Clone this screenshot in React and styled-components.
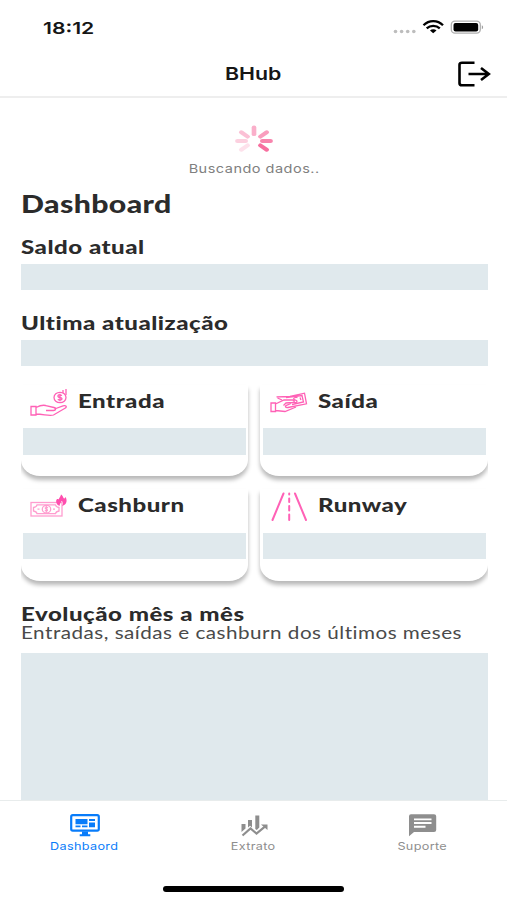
import styled, { createGlobalStyle } from "styled-components"

const cards = [
    { title: "Entrada", Icon: EntradaIcon },
    { title: "Saída", Icon: SaidaIcon },
    { title: "Cashburn", Icon: CashburnIcon },
    { title: "Runway", Icon: RunwayIcon },
]

const spokes = [
    { angle: 0, opacity: 0.55 },
    { angle: 50, opacity: 0.68 },
    { angle: 90, opacity: 0.85 },
    { angle: 130, opacity: 1 },
    { angle: 230, opacity: 0.2 },
    { angle: 270, opacity: 0.32 },
    { angle: 310, opacity: 0.43 },
]

export default function App(){
    return(
        <SCScreen>
            <GlobalStyle />
            <SCStatusBar>
                <SCSystemText $size={16.5} $weight={600} $stretch={1.28}>18:12</SCSystemText>
                <StatusIcons />
            </SCStatusBar>
            <SCHeader>
                <span />
                <SCSystemText $size={17.5} $weight={600} $stretch={1.22} $center>BHub</SCSystemText>
                <LogoutIcon />
            </SCHeader>
            <SCContent>
                <SCLoading>
                    <Spinner />
                    <SCSystemText $size={12} $stretch={1.21} $center $color="#808080" $spacing={0.4}>Buscando dados..</SCSystemText>
                </SCLoading>
                <SCTitle>Dashboard</SCTitle>
                <SCSubtitle>Saldo atual</SCSubtitle>
                <SCSkeleton />
                <SCSubtitle $top={20}>Ultima atualização</SCSubtitle>
                <SCSkeleton />
                <SCCards>
                    {cards.map(({ title, Icon }) => (
                        <SCCard key={title}>
                            <SCCardHeader>
                                <Icon />
                                <SCHeading>{title}</SCHeading>
                            </SCCardHeader>
                            <SCSkeleton />
                        </SCCard>
                    ))}
                </SCCards>
                <SCChartTitle>Evolução mês a mês</SCChartTitle>
                <SCChartText>Entradas, saídas e cashburn dos últimos meses</SCChartText>
                <SCChart />
            </SCContent>
            <SCTabBar>
                <SCTab $active>
                    <DashboardIcon />
                    <SCTabLabel>Dashbaord</SCTabLabel>
                </SCTab>
                <SCTab>
                    <ExtratoIcon />
                    <SCTabLabel>Extrato</SCTabLabel>
                </SCTab>
                <SCTab>
                    <SuporteIcon />
                    <SCTabLabel>Suporte</SCTabLabel>
                </SCTab>
            </SCTabBar>
            <SCHomeArea>
                <SCHomeIndicator />
            </SCHomeArea>
        </SCScreen>
    )
}

function StatusIcons(){
    return(
        <svg width="92" height="18" viewBox="0 0 92 18">
            <g fill="#bdbdbd">
                <circle cx="3.5" cy="13.5" r="1.8" />
                <circle cx="9.6" cy="13.5" r="1.8" />
                <circle cx="15.7" cy="13.5" r="1.8" />
                <circle cx="21.8" cy="13.5" r="1.8" />
            </g>
            <g fill="none" stroke="#000" strokeWidth="2.3">
                <path d="M31.5 7.2C37 1.7 45.5 1.7 51 7.2" />
                <path d="M34.7 10.4C38.3 7 44.2 7 47.8 10.4" />
            </g>
            <path d="M38 12.4C39.8 11 42.7 11 44.5 12.4L41.2 15.2Z" />
            <rect x="59.3" y="3.2" width="29" height="12" rx="3.6" fill="#fff" stroke="#b0b0b0" strokeWidth="1.3" />
            <rect x="61.5" y="5" width="24.7" height="8.5" rx="2" />
            <path d="M89.8 7.2C91.6 7.8 91.6 10.6 89.8 11.2Z" fill="#a0a0a0" />
        </svg>
    )
}

function LogoutIcon(){
    return(
        <svg width="34" height="26" viewBox="0 0 34 26" fill="none" stroke="#000" strokeWidth="2.6">
            <path d="M17.5 1.7H5Q2.5 1.7 2.5 3.8V22.2Q2.5 24.3 5 24.3H17.5" />
            <path d="M11.5 13H31.5M24 7L31.8 13L24 19" />
        </svg>
    )
}

function Spinner(){
    return(
        <svg width="40" height="32" viewBox="-20 -16 40 32">
            <g transform="scale(1.22 1)" stroke="#f76f9f" strokeWidth="3.8" strokeLinecap="round">
                {spokes.map(({ angle, opacity }) => (
                    <path key={angle} d="M0 -6.8V-13.6" opacity={opacity} transform={`rotate(${angle})`} />
                ))}
            </g>
        </svg>
    )
}

function EntradaIcon(){
    return(
        <SCCardIcon viewBox="0 0 38 30">
            <path d="M1 18.5H6V27H1ZM6 19.5C10 17.5 14 16.5 17 18L24 19.5C26.5 20 26 22.5 23.5 22.5H16M24.5 21L33 17.8C36 17 37.5 18.8 35 20.2L23.5 27C19.5 28.3 15 26.5 6 26" />
            <ellipse cx="30" cy="9.5" rx="6" ry="5.2" />
            <path d="M32 7.5C29.5 6.3 27.5 7 28 8.5C28.5 10 32 9 32 10.8C31.8 12.3 29 12.3 27.8 11.2M30 5.8V13.3M33 5V2M36 7V1" />
        </SCCardIcon>
    )
}

function SaidaIcon(){
    return(
        <SCCardIcon viewBox="0 0 38 30">
            <path d="M1 15H5.5V23.5H1ZM5.5 16L14 12H23C25 12.5 24.5 14.3 22.5 14.5L16 15L13.5 17.5M5.5 22.5L15 23.5L26 19" />
            <path d="M6.5 8.8L20 8.5L34.5 5.2L36.5 15.8L18 19.5C15.5 20 14.5 18.3 16.5 17.3L21 15.5M12 12L7.5 10M16 9.7L32 7.5L33.5 14L22 16.5" />
            <path d="M27.5 9.5C25 9 23 10 24 11.5C25 12.5 27 12 27 13.5C27 15 24.5 15 23.5 14M30 9.5L31 12" />
        </SCCardIcon>
    )
}

function CashburnIcon(){
    return(
        <SCCardIcon viewBox="0 0 38 30" $light>
            <rect x="1" y="10.5" width="31" height="13.5" />
            <path d="M7 12.8H25.5Q26 15 29 15.5V19Q26 19.5 25.5 21.7H7Q6.5 19.5 3.5 19V15.5Q6.5 15 7 12.8Z" />
            <ellipse cx="16.5" cy="17.2" rx="4.2" ry="3.8" />
            <path d="M18 15.8C15.5 14.7 14.3 16 16.3 17.1C18.3 18.2 17.3 19.5 14.8 18.5M16.3 14V20.5M7.5 17.2H9.5M23 17.2H25" />
            <path d="M27 12C25 8.5 27 6 28.5 7.5C29.5 5.5 30.5 4.8 31 2.5C33.5 4 33 6.5 34.5 6.5L35.5 5C38 9 36 13.5 32 13.8C33.8 11.5 33 9.5 31.5 9C31 11 29.5 11.5 29.8 13.8C28.5 13.5 27.6 13 27 12Z" fill="#ff4eae" stroke="none" />
        </SCCardIcon>
    )
}

function RunwayIcon(){
    return(
        <SCCardIcon viewBox="0 0 38 30">
            <g strokeWidth="2" strokeLinecap="round">
                <path d="M13.5 1.5L2.5 28M25 1.5L36 28" />
                <path d="M19.2 1.5V2.5M19.2 6.5V10M19.2 14V18.5M19.2 22.5V28" />
            </g>
        </SCCardIcon>
    )
}

function DashboardIcon(){
    return(
        <svg width="30" height="23" viewBox="0 0 30 23" fill="currentColor">
            <rect x="1.2" y="1.1" width="27.6" height="15.6" rx="1.6" fill="none" stroke="currentColor" strokeWidth="2.2" />
            <path d="M5.5 5H17.5V10.3H5.5ZM19 5H25V7H19ZM19 8.6H25V13.2H19ZM5.5 11.5H10.5V13.2H5.5ZM12 11.5H17.5V13.2H12ZM12 17.5H18V20.2H20.3V22.3H9.7V20.2H12Z" />
        </svg>
    )
}

function ExtratoIcon(){
    return(
        <svg width="30" height="23" viewBox="0 0 30 23" fill="currentColor">
            <path d="M2.5 10H6.5V14.5L2.5 18ZM9 6H13V13.5L11 11.7L9 13.5ZM16.3 1.5H20.3V13.5L17.8 16L16.3 15Z" />
            <path d="M3.5 21.5L11.5 14.5L17.5 19.5L26.5 12.2" fill="none" stroke="currentColor" strokeWidth="2.2" />
            <path d="M22 10.5H28.5V16Z" />
        </svg>
    )
}

function SuporteIcon(){
    return(
        <svg width="30" height="23" viewBox="0 0 30 23">
            <path d="M3 0.3H26Q28.2 0.3 28.2 2.2V16Q28.2 18 26 18H6L1 22.3V2.2Q1 0.3 3 0.3Z" fill="currentColor" />
            <path d="M6 5.4H23.5M6 9H23.5M6 12.7H17.5" stroke="#fff" strokeWidth="1.9" />
        </svg>
    )
}

const GlobalStyle = createGlobalStyle`
    *{
        box-sizing: border-box;
    }

    body{
        margin: 0;
        background-color: #FFFFFF;
    }

    svg{
        display: block;
        flex-shrink: 0;
    }
`

const SCScreen = styled.div`
    width: 507px;
    height: 900px;
    overflow: hidden;
    background-color: #FFFFFF;
    display: flex;
    flex-direction: column;
`

const SCSystemText = styled.p`
    margin: 0;
    font-family: 'Inter', sans-serif;
    font-size: ${({ $size }) => $size}px;
    line-height: 20px;
    font-weight: ${({ $weight }) => $weight || 400};
    letter-spacing: ${({ $spacing }) => $spacing || 0}px;
    color: ${({ $color }) => $color || "#161616"};
    white-space: nowrap;
    transform: scaleX(${({ $stretch }) => $stretch});
    transform-origin: ${({ $center }) => $center ? "center" : "left"};
`

const SCStatusBar = styled.div`
    height: 50px;
    flex-shrink: 0;
    display: flex;
    justify-content: space-between;
    align-items: flex-start;
    padding: 18px 23px 0 43px;
`

const SCHeader = styled.div`
    height: 48px;
    flex-shrink: 0;
    display: grid;
    grid-template-columns: 1fr auto 1fr;
    align-items: center;
    padding: 2px 16px 0;
    border-bottom: 2px solid #EEEEEE;

    svg{
        justify-self: end;
    }
`

const SCContent = styled.div`
    flex: 1;
    min-height: 0;
    display: flex;
    flex-direction: column;
    overflow: hidden;
    margin: 0 19px 0 20.5px;
`

const SCLoading = styled.div`
    height: 91px;
    flex-shrink: 0;
    display: flex;
    flex-direction: column;
    align-items: center;
    padding-top: 27px;

    p{
        margin-top: 2px;
    }
`

const SCHeading = styled.h2`
    margin: 0;
    flex-shrink: 0;
    align-self: flex-start;
    font-family: 'Lato', sans-serif;
    font-size: 18.8px;
    line-height: 26px;
    font-weight: 900;
    letter-spacing: 0.4px;
    color: #2B2B2B;
    white-space: nowrap;
    transform: scaleX(1.28);
    transform-origin: left;
`

const SCTitle = styled(SCHeading)`
    font-size: 24px;
    line-height: 30px;
    letter-spacing: 0.3px;
    transform: scaleX(1.26);
`

const SCSubtitle = styled(SCHeading)`
    margin-top: ${({ $top }) => $top ?? 15}px;
    margin-bottom: 3.5px;
`

const SCSkeleton = styled.div`
    height: 26.5px;
    flex-shrink: 0;
    background-color: #E0E9ED;
`

const SCCards = styled.div`
    display: grid;
    grid-template-columns: 1fr 1fr;
    column-gap: 12px;
    row-gap: 13px;
    margin-top: 18.5px;
    flex-shrink: 0;
`

const SCCard = styled.div`
    height: 91.5px;
    padding: 0 2.5px;
    background-color: #FFFFFF;
    border-radius: 0 0 19px 19px / 0 0 16px 16px;
    box-shadow: 0 4px 4px rgba(0, 0, 0, 0.28);
`

const SCCardHeader = styled.div`
    height: 43.5px;
    display: flex;
    align-items: flex-start;
    padding: 3px 0 0 7px;
    gap: 10px;
`

const SCCardIcon = styled.svg`
    width: 38px;
    height: 30px;
    fill: none;
    stroke: ${({ $light }) => $light ? "#FF9DCF" : "#FF61B6"};
    stroke-width: 1.3;
`

const SCChartTitle = styled(SCHeading)`
    margin-top: 20.5px;
`

const SCChartText = styled.p`
    margin: -5px 0 9px;
    align-self: flex-start;
    font-family: 'Lato', sans-serif;
    font-size: 16.8px;
    line-height: 22px;
    letter-spacing: 0.4px;
    color: #4A4A4A;
    white-space: nowrap;
    transform: scaleX(1.23);
    transform-origin: left;
`

const SCChart = styled(SCSkeleton)`
    height: 200px;
`

const SCTabBar = styled.div`
    height: 62px;
    flex-shrink: 0;
    display: grid;
    grid-template-columns: repeat(3, 1fr);
    border-top: 1px solid #E8ECEC;
    padding-top: 13px;
`

const SCTab = styled.div`
    display: flex;
    flex-direction: column;
    align-items: center;
    color: ${({ $active }) => $active ? "#087CFA" : "#8E8E8E"};
`

const SCTabLabel = styled.p`
    margin: 2px 0 0;
    font-family: 'Inter', sans-serif;
    font-size: 10.8px;
    line-height: 16px;
    letter-spacing: 0.3px;
    white-space: nowrap;
    transform: scaleX(1.17);
`

const SCHomeArea = styled.div`
    height: 38px;
    flex-shrink: 0;
    display: flex;
    justify-content: center;
    padding-top: 24px;
`

const SCHomeIndicator = styled.div`
    width: 181px;
    height: 5.5px;
    border-radius: 3px;
    background-color: #000000;
`
